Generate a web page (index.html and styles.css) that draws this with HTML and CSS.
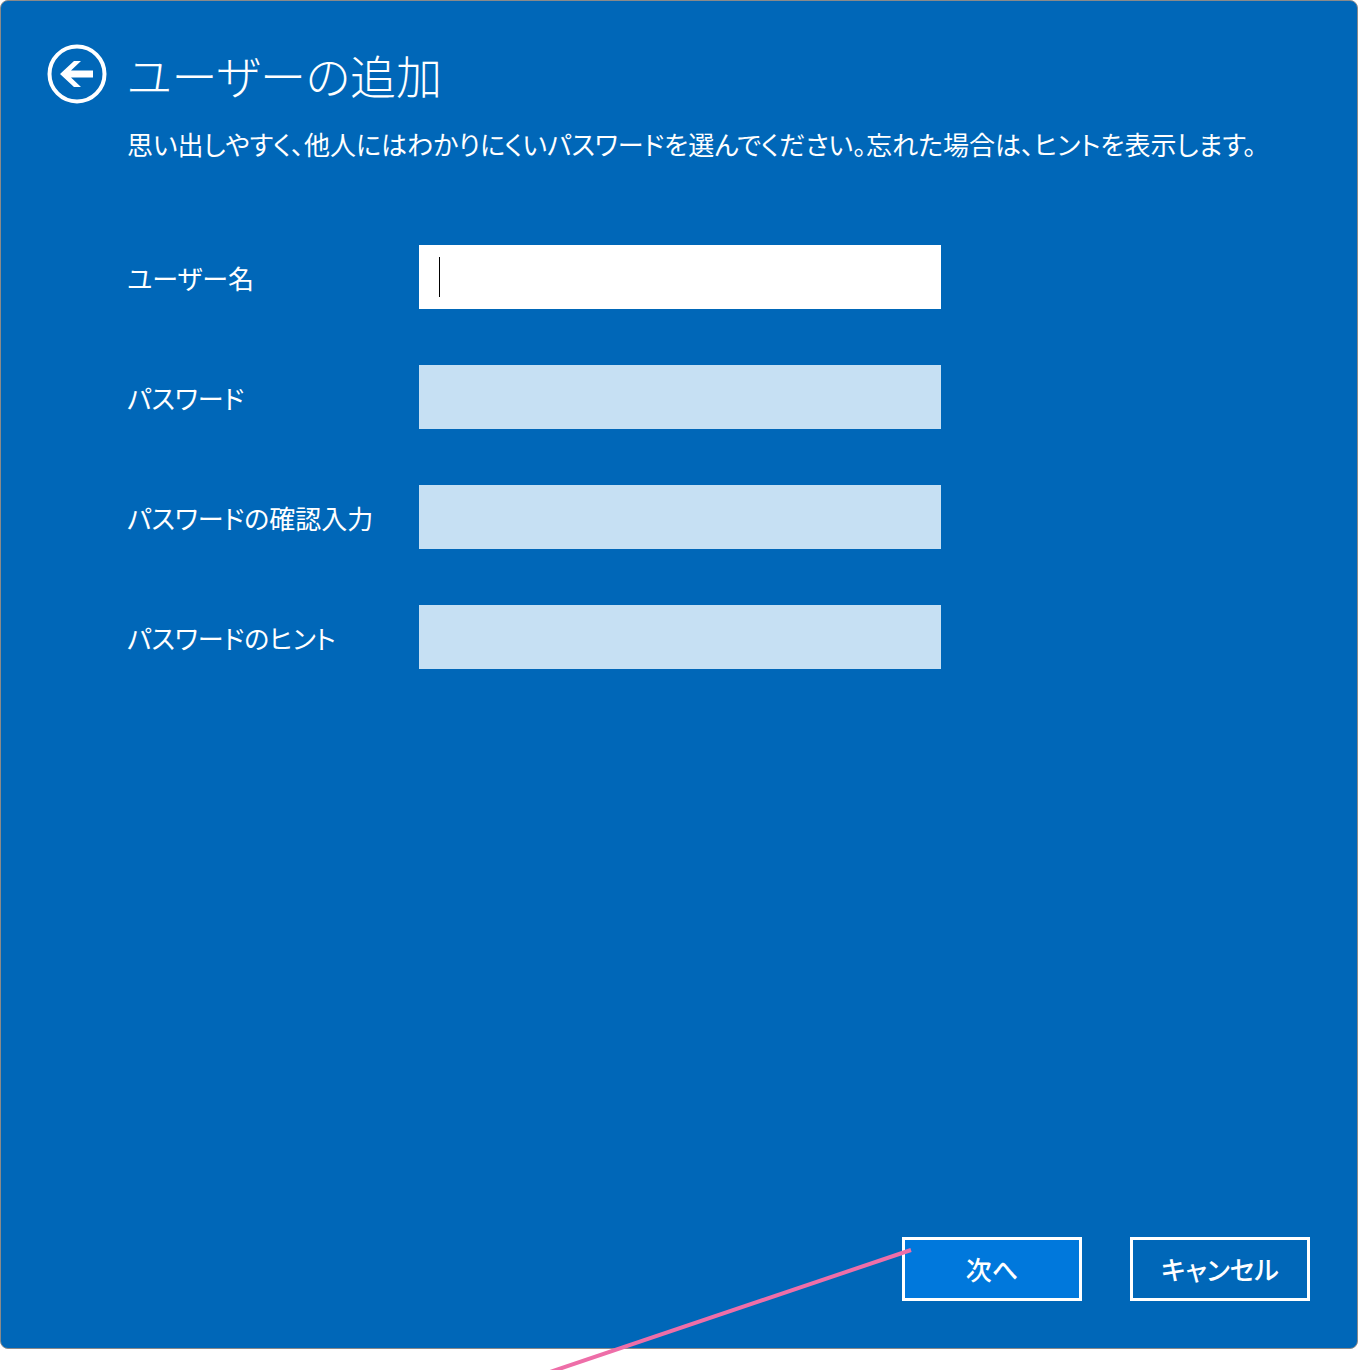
FILE: index.html
```html
<!DOCTYPE html>
<html lang="ja">
<head>
    <meta charset="UTF-8">
    <title>ユーザーの追加</title>
    <link rel="stylesheet" href="styles.css">
</head>
<body>
    <div class="dialog">
        <div class="header">
            <svg class="back" width="60" height="60" viewBox="0 0 60 60">
                <circle cx="30" cy="30" r="27.5" fill="none" stroke="#fff" stroke-width="4"></circle>
                <path d="M13 30 L27 17 L34 17 L24 26.5 L46 26.5 L46 33.5 L24 33.5 L34 43 L27 43 Z" fill="#fff"></path>
            </svg>
            <h1 class="title">ユーザーの追加</h1>
        </div>
        <p class="intro">思い出しやすく、他人にはわかりにくいパスワードを選んでください。忘れた場合は、ヒントを表示します。</p>
        <div class="form">
            <div class="row">
                <div class="label">ユーザー名</div>
                <div class="field active"><span class="caret"></span></div>
            </div>
            <div class="row">
                <div class="label">パスワード</div>
                <div class="field"></div>
            </div>
            <div class="row">
                <div class="label">パスワードの確認入力</div>
                <div class="field"></div>
            </div>
            <div class="row">
                <div class="label">パスワードのヒント</div>
                <div class="field"></div>
            </div>
        </div>
        <div class="buttons">
            <div class="btn primary">次へ</div>
            <div class="btn">キャンセル</div>
        </div>
    </div>
    <svg class="pointer" width="1358" height="1370" viewBox="0 0 1358 1370">
        <line x1="911" y1="1250" x2="550" y2="1372" stroke="#ee6ea8" stroke-width="4"></line>
    </svg>
</body>
</html>
```

FILE: styles.css
```css
html, body {
    margin: 0;
    height: 1370px;
    overflow: hidden;
    background-color: #fff;
}
body {
    position: relative;
    font-family: "Noto Sans CJK JP", "Noto Sans", sans-serif;
    color: #fff;
}
.dialog {
    box-sizing: border-box;
    display: flex;
    flex-direction: column;
    width: 1358px;
    height: 1349px;
    padding: 43px 47px 47px 46px;
    background-color: #0067b8;
    border: 1px solid #8a8a8a;
    border-radius: 8px;
}
.header {
    display: flex;
    align-items: center;
    gap: 20px;
    height: 60px;
}
.title {
    margin: 0;
    font-size: 46px;
    font-weight: 300;
    font-feature-settings: "palt";
    line-height: 60px;
}
.intro {
    margin: 24px 0 0 80px;
    font-size: 26px;
    line-height: 32px;
    font-feature-settings: "palt";
    white-space: nowrap;
}
.form {
    display: flex;
    flex-direction: column;
    gap: 56px;
    margin: 85px 0 0 80px;
    flex: 1;
}
.row {
    display: flex;
    align-items: center;
}
.label {
    width: 292px;
    font-size: 26px;
    font-feature-settings: "palt";
}
.field {
    display: flex;
    align-items: center;
    width: 522px;
    height: 64px;
    padding-left: 20px;
    box-sizing: border-box;
    background-color: #c6e0f3;
}
.field.active {
    background-color: #fff;
}
.caret {
    width: 1px;
    height: 40px;
    background-color: #000;
}
.buttons {
    display: flex;
    justify-content: flex-end;
    gap: 48px;
}
.btn {
    box-sizing: border-box;
    width: 180px;
    height: 64px;
    border: 3px solid #fff;
    text-align: center;
    font-size: 26px;
    font-weight: 500;
    line-height: 58px;
    font-feature-settings: "palt";
}
.btn.primary {
    background-color: #0078dc;
}
.pointer {
    position: absolute;
    top: 0;
    left: 0;
}
```
